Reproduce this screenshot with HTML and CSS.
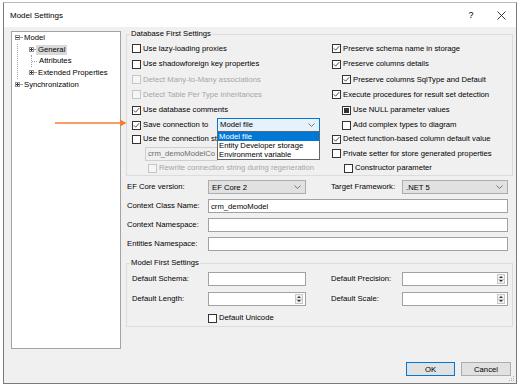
FILE: index.html
```html
<!DOCTYPE html>
<html lang="en">
  <head>
    <meta charset="UTF-8" />
    <meta name="viewport" content="width=device-width, initial-scale=1.0" />
    <title>Model Settings</title>
    <link rel="stylesheet" href="styles.css">
  </head>
  <body>
    <div class="window">
      <div class="titlebar">
        <span class="title">Model Settings</span>
        <span class="help">?</span>
        <span class="close">
          <svg width="9" height="9" viewBox="0 0 9 9"><path d="M0.5 0.5L8.5 8.5M8.5 0.5L0.5 8.5" /></svg>
        </span>
      </div>

      <div class="content">
        <div class="main">
          <ul class="tree">
            <li>
              <div class="tree-row"><span class="exp"></span><span class="dash"></span><span class="node">Model</span></div>
              <ul class="sub">
                <li><div class="tree-row"><span class="exp plus"></span><span class="dash"></span><span class="node sel">General</span></div></li>
                <li><div class="tree-row leaf-row"><span class="leaf"></span><span class="node">Attributes</span></div></li>
                <li><div class="tree-row"><span class="exp plus"></span><span class="dash"></span><span class="node">Extended Properties</span></div></li>
              </ul>
            </li>
            <li><div class="tree-row"><span class="exp plus"></span><span class="dash"></span><span class="node">Synchronization</span></div></li>
          </ul>

          <div class="settings">
            <fieldset class="group">
              <legend>Database First Settings</legend>
              <div class="db-grid">
                <!-- left column -->
                <label class="check"><span class="box"></span>Use lazy-loading proxies</label>
                <label class="check"><span class="box"></span>Use shadowforeign key properties</label>
                <label class="check off"><span class="box"></span>Detect Many-to-Many associations</label>
                <label class="check off"><span class="box"></span>Detect Table Per Type inheritances</label>
                <label class="check"><span class="box"><svg viewBox="0 0 7 7"><path d="M0.8 3.4L2.6 5.2L6.2 1.2" /></svg></span>Use database comments</label>
                <div class="check">
                  <span class="box"><svg viewBox="0 0 7 7"><path d="M0.8 3.4L2.6 5.2L6.2 1.2" /></svg></span>Save connection to
                  <div class="combo">
                    <span>Model file</span>
                    <svg class="chev" width="7" height="4" viewBox="0 0 7 4"><path d="M0.5 0.5L3.5 3.5L6.5 0.5" /></svg>
                    <div class="combo-list">
                      <div class="opt active">Model file</div>
                      <div class="opt">Entity Developer storage</div>
                      <div class="opt">Environment variable</div>
                    </div>
                  </div>
                </div>
                <label class="check"><span class="box"></span><span class="clip">Use the connection string from appsettings.json</span></label>
                <div class="indent"><input class="textbox conn" type="text" value="crm_demoModelConnectionString" disabled></div>
                <label class="check off rewrite"><span class="box"></span>Rewrite connection string during regeneration</label>

                <!-- right column -->
                <label class="check"><span class="box"><svg viewBox="0 0 7 7"><path d="M0.8 3.4L2.6 5.2L6.2 1.2" /></svg></span>Preserve schema name in storage</label>
                <label class="check"><span class="box"><svg viewBox="0 0 7 7"><path d="M0.8 3.4L2.6 5.2L6.2 1.2" /></svg></span>Preserve columns details</label>
                <label class="check sub1"><span class="box"><svg viewBox="0 0 7 7"><path d="M0.8 3.4L2.6 5.2L6.2 1.2" /></svg></span>Preserve columns SqlType and Default</label>
                <label class="check"><span class="box"><svg viewBox="0 0 7 7"><path d="M0.8 3.4L2.6 5.2L6.2 1.2" /></svg></span>Execute procedures for result set detection</label>
                <label class="check sub1 mixed"><span class="box"></span>Use NULL parameter values</label>
                <label class="check sub1"><span class="box"></span>Add complex types to diagram</label>
                <label class="check"><span class="box"><svg viewBox="0 0 7 7"><path d="M0.8 3.4L2.6 5.2L6.2 1.2" /></svg></span>Detect function-based column default value</label>
                <label class="check"><span class="box"></span>Private setter for store generated properties</label>
                <label class="check sub2"><span class="box"></span>Constructor parameter</label>
              </div>
            </fieldset>

            <div class="form">
              <span class="lbl">EF Core version:</span>
              <div class="select">EF Core 2<svg class="chev" width="7" height="4" viewBox="0 0 7 4"><path d="M0.5 0.5L3.5 3.5L6.5 0.5" /></svg></div>
              <span class="lbl col4">Target Framework:</span>
              <div class="select">.NET 5<svg class="chev" width="7" height="4" viewBox="0 0 7 4"><path d="M0.5 0.5L3.5 3.5L6.5 0.5" /></svg></div>

              <span class="lbl">Context Class Name:</span>
              <input class="textbox wide" type="text" value="crm_demoModel">
              <span class="lbl">Context Namespace:</span>
              <input class="textbox wide" type="text" value="">
              <span class="lbl">Entities Namespace:</span>
              <input class="textbox wide" type="text" value="">
            </div>

            <fieldset class="group model-first">
              <legend>Model First Settings</legend>
              <div class="form mf">
                <span class="lbl">Default Schema:</span>
                <input class="textbox" type="text" value="">
                <span class="lbl col4">Default Precision:</span>
                <div class="spin"><input type="text" value=""><span class="spin-btns"><span class="up"></span><span class="down"></span></span></div>

                <span class="lbl">Default Length:</span>
                <div class="spin"><input type="text" value=""><span class="spin-btns"><span class="up"></span><span class="down"></span></span></div>
                <span class="lbl col4">Default Scale:</span>
                <div class="spin"><input type="text" value=""><span class="spin-btns"><span class="up"></span><span class="down"></span></span></div>

                <label class="check col2"><span class="box"></span>Default Unicode</label>
              </div>
            </fieldset>
          </div>
        </div>

        <div class="footer">
          <button type="button" class="btn btn-default">OK</button>
          <button type="button" class="btn">Cancel</button>
        </div>

        <svg class="grip" width="6" height="6" viewBox="0 0 6 6">
          <rect x="4" y="0" width="1" height="1" />
          <rect x="2" y="2" width="1" height="1" />
          <rect x="4" y="2" width="1" height="1" />
          <rect x="0" y="4" width="1" height="1" />
          <rect x="2" y="4" width="1" height="1" />
          <rect x="4" y="4" width="1" height="1" />
        </svg>
      </div>

      <!-- annotation arrow pointing at "Save connection to" -->
      <svg class="arrow" width="72" height="10" viewBox="0 0 72 10">
        <line x1="0" y1="5" x2="66" y2="5" />
        <polygon points="65,1.5 71.5,5 65,8.5" />
      </svg>
    </div>
  </body>
</html>
```

FILE: styles.css
```css
* {
  box-sizing: border-box;
}

body {
  margin: 0;
  background: #fff;
  font-family: "Liberation Sans", Arial, sans-serif;
  font-size: 7.7px;
  color: #000;
}

.window {
  position: relative;
  display: flex;
  flex-direction: column;
  width: 514px;
  height: 382px;
  margin: 2px 0 0 3px;
  border: 1px solid #7a7a7a;
  border-top-color: #b9b9b9;
}

/* title bar */
.titlebar {
  display: flex;
  align-items: center;
  height: 24px;
  padding-left: 6px;
  background: #fff;
}
.title {
  flex: 1;
  font-size: 8px;
}
.help {
  width: 30px;
  text-align: center;
  font-size: 9px;
}
.close {
  display: flex;
  justify-content: center;
  width: 30px;
}
.close path {
  stroke: #222;
  stroke-width: 0.9;
  fill: none;
}

.content {
  position: relative;
  flex: 1;
  padding-top: 2px;
  background: #f0f0f0;
}

.main {
  display: flex;
  align-items: flex-start;
}

/* tree */
.tree,
.tree ul {
  list-style: none;
  margin: 0;
  padding: 0;
}
.tree {
  flex: none;
  width: 110px;
  height: 318px;
  margin: 2px 0 0 7px;
  padding-top: 0;
  background: #fff;
  border: 1px solid #a3a3a3;
}
.tree-row {
  display: flex;
  align-items: center;
  height: 11.7px;
  padding-left: 3px;
  white-space: nowrap;
}
.tree .sub {
  margin-left: 5px;
  border-left: 1px dotted #a0a0a0;
}
.sub .tree-row {
  padding-left: 11px;
}
.sub .leaf-row {
  padding-left: 13px;
}
.exp {
  flex: none;
  width: 5px;
  height: 5px;
  border: 1px solid #919191;
  background: linear-gradient(#333, #333) center / 3px 1px no-repeat, #fff;
}
.exp.plus {
  background: linear-gradient(#333, #333) center / 3px 1px no-repeat,
    linear-gradient(#333, #333) center / 1px 3px no-repeat, #fff;
}
.dash {
  width: 2px;
  border-top: 1px dotted #a0a0a0;
}
.leaf {
  display: flex;
  align-items: center;
  align-self: stretch;
  width: 6px;
  border-left: 1px dotted #a0a0a0;
}
.leaf::after {
  content: "";
  width: 5px;
  border-top: 1px dotted #a0a0a0;
}
.node {
  padding: 0 2px;
  line-height: 10px;
}
.node.sel {
  background: #d9d9d9;
}

/* settings side */
.settings {
  width: 387px;
  margin-left: 5px;
}

.group {
  min-width: 0;
  margin: 0;
  padding: 0;
  border: 1px solid #dcdcdc;
}
.group legend {
  margin-left: 3px;
  padding: 0 1px;
  line-height: 10px;
}

.db-grid {
  display: grid;
  grid-template-columns: 200px 1fr;
  grid-template-rows: 15px 16px 15px 15px 16px 14px 14px 15px 14px;
  grid-auto-flow: column;
  padding: 2px 0 0 5px;
}

.check {
  display: flex;
  align-items: center;
  gap: 2px;
  white-space: nowrap;
  line-height: 10px;
}
.box {
  display: flex;
  align-items: center;
  justify-content: center;
  flex: none;
  width: 9px;
  height: 9px;
  border: 1px solid #333;
  background: #fff;
}
.box svg {
  width: 7px;
  height: 7px;
}
.box path {
  fill: none;
  stroke: #333;
  stroke-width: 0.9;
}
.check.mixed .box::after {
  content: "";
  width: 5px;
  height: 5px;
  background: #333;
}
.check.off {
  color: #a6a6a6;
}
.check.off .box {
  border-color: #c6c6c6;
  background: #f5f5f5;
}
.sub1 {
  padding-left: 10px;
}
.sub2 {
  padding-left: 12px;
}
.rewrite {
  padding-left: 16px;
}
.indent {
  display: flex;
  align-items: center;
  padding-left: 13px;
}

/* the open list hides the rest of this label */
.clip {
  max-width: 74px;
  overflow: hidden;
}

/* combo with open list */
.combo {
  position: relative;
  display: flex;
  align-items: center;
  justify-content: space-between;
  width: 103px;
  height: 14px;
  margin: 0 12px 0 auto;
  padding: 0 4px 0 2px;
  border: 1px solid #0078d7;
  background: #e5f1fb;
}
.combo-list {
  position: absolute;
  top: 100%;
  left: -1px;
  right: -1px;
  z-index: 2;
  border: 1px solid #646464;
  background: #fff;
}
.opt {
  height: 9px;
  padding-left: 1px;
  line-height: 9px;
}
.opt.active {
  background: #0078d7;
  color: #fff;
}
.chev path {
  fill: none;
  stroke: #666;
  stroke-width: 0.9;
}

.textbox {
  height: 14px;
  padding: 0 2px;
  border: 1px solid #a2a2a2;
  background: #fff;
  font: inherit;
  color: #000;
  outline: none;
}
.textbox.conn {
  width: 73px;
  border-color: #cfcfcf;
  background: #f0f0f0;
  color: #6d6d6d;
}

/* form rows */
.form {
  display: grid;
  grid-template-columns: 81px 98px 25px 71px 106px;
  grid-auto-rows: 14px;
  row-gap: 5px;
  align-items: center;
  margin-top: 4px;
  padding-left: 1px;
}
.lbl {
  white-space: nowrap;
  line-height: 10px;
}
.col2 {
  grid-column: 2;
}
.col4 {
  grid-column: 4;
}
.wide {
  grid-column: 2 / span 4;
}
.select {
  display: flex;
  align-items: center;
  justify-content: space-between;
  height: 14px;
  padding: 0 4px 0 3px;
  border: 1px solid #adadad;
  background: #e1e1e1;
}

.model-first {
  margin-top: 7px;
}
.form.mf {
  grid-template-columns: 76px 98px 25px 71px 106px;
  grid-template-rows: 14px 14px 12px;
  row-gap: 6px;
  margin: 0;
  padding: 4px 0 2px 5px;
}

.spin {
  display: flex;
  height: 14px;
  border: 1px solid #a2a2a2;
  background: #fff;
}
.spin input {
  flex: 1;
  min-width: 0;
  border: 0;
  padding: 0 2px;
  font: inherit;
  outline: none;
}
.spin-btns {
  display: flex;
  flex-direction: column;
  width: 8px;
  margin: 1px 2px 1px 0;
  border: 1px solid #c8c8c8;
  background: #f0f0f0;
}
.up,
.down {
  display: flex;
  flex: 1;
  align-items: center;
  justify-content: center;
}
.up {
  border-bottom: 1px solid #c8c8c8;
}
.up::after {
  content: "";
  border: 2px solid transparent;
  border-top: 0;
  border-bottom: 2px solid #333;
}
.down::after {
  content: "";
  border: 2px solid transparent;
  border-bottom: 0;
  border-top: 2px solid #333;
}

/* buttons */
.footer {
  display: flex;
  justify-content: flex-end;
  gap: 6px;
  margin-top: 13px;
  padding-right: 5px;
}
.btn {
  width: 50px;
  height: 14px;
  padding: 0;
  border: 1px solid #adadad;
  background: #e1e1e1;
  font: inherit;
  color: #000;
}
.btn-default {
  width: 49px;
  border-color: #0078d7;
}

.grip {
  position: absolute;
  right: 1px;
  bottom: 1px;
  fill: #b0b0b0;
}

.arrow {
  position: absolute;
  left: 51px;
  top: 115px;
}
.arrow line {
  stroke: #f47b30;
  stroke-width: 1.3;
}
.arrow polygon {
  fill: #f47b30;
}
```
